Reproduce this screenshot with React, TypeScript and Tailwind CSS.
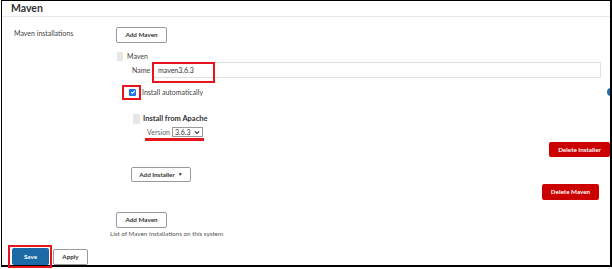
import React from "react";

const font = { fontFamily: 'Lato, "Noto Sans", sans-serif' };

function Btn({ children, className = "" }: { children: React.ReactNode; className?: string }) {
  return (
    <div
      className={`flex items-center justify-center rounded-[2px] border border-[#9a9a9a] bg-white text-[6.3px] font-bold text-[#333] ${className}`}
    >
      {children}
    </div>
  );
}

function RedBtn({ children, className = "" }: { children: React.ReactNode; className?: string }) {
  return (
    <div
      className={`flex items-center justify-center rounded-[2px] bg-[#cc0000] text-[6.3px] font-bold text-white ${className}`}
    >
      {children}
    </div>
  );
}

export default function App() {
  return (
    <div className="relative h-[269px] w-[612px] overflow-hidden bg-white" style={font}>
      {/* blue dot behind the right border */}
      <div className="absolute left-[607px] top-[88px] h-[8px] w-[8px] rounded-full bg-[#1d6fa5]" />

      <div className="relative z-10 ml-[1px] flex h-[267px] w-[611px] flex-col border-b-2 border-l border-r-2 border-t border-black">
        {/* header */}
        <div className="flex h-[16px] items-center border-b border-[#e8e8e8] pl-[9px]">
          <span className="text-[10.5px] font-bold leading-none text-[#333]">Maven</span>
        </div>

        {/* body */}
        <div className="flex">
          <div className="w-[114px] pl-[12px] pt-[12px]">
            <span className="block text-[7px] leading-[8px] text-[#444]">Maven installations</span>
          </div>

          <div className="flex flex-1 flex-col">
            <Btn className="mt-[10px] h-[16px] w-[51px]">Add Maven</Btn>

            {/* Maven block header */}
            <div className="mt-[9px] flex h-[9px] items-start">
              <div className="ml-[1px] h-[9px] w-[6px] bg-[#e6e6e6]" />
              <span className="ml-[4px] text-[7px] leading-[8px] text-[#444]">Maven</span>
            </div>

            {/* Name row */}
            <div className="mt-[1px] flex h-[16px] items-center">
              <span className="ml-[16px] w-[21px] text-[7px] leading-[8px] text-[#444]">Name</span>
              <div className="mr-[9px] flex h-[16px] flex-1 items-center border border-[#e0e0e0] pl-[4px]">
                <span className="text-[7px] leading-[8px] text-[#333]">maven3.6.3</span>
              </div>
            </div>

            {/* install automatically */}
            <div className="mt-[10px] flex h-[8px] items-center">
              <div className="ml-[13px] flex h-[7px] w-[7px] items-center justify-center rounded-[1px] bg-[#1a73e8]">
                <svg width="6" height="6" viewBox="0 0 10 10">
                  <path d="M2 5.2 L4.2 7.3 L8.2 2.6" stroke="white" strokeWidth="1.8" fill="none" />
                </svg>
              </div>
              <span className="ml-[6px] text-[7px] leading-[8px] text-[#444]">Install automatically</span>
            </div>

            {/* installer header */}
            <div className="mt-[18px] flex h-[10px] items-center">
              <div className="ml-[17px] h-[10px] w-[7px] bg-[#e6e6e6]" />
              <span className="ml-[3px] text-[7.5px] font-bold leading-[8px] text-[#333]">Install from Apache</span>
            </div>

            {/* version row */}
            <div className="mt-[3px] flex h-[10px] items-center">
              <span className="ml-[31px] w-[25px] text-[7px] leading-[8px] text-[#666]">Version</span>
              <div className="flex h-[10px] w-[31px] items-center justify-between border border-[#9a9a9a] px-[2px]">
                <span className="text-[7px] leading-[8px] text-[#333]">3.6.3</span>
                <svg width="6" height="5" viewBox="0 0 10 8">
                  <path d="M1.5 2 L5 5.5 L8.5 2" stroke="#333" strokeWidth="1.8" fill="none" />
                </svg>
              </div>
            </div>

            <RedBtn className="mt-[5px] h-[15px] w-[61px] self-end">Delete Installer</RedBtn>

            <Btn className="ml-[15px] mt-[10px] h-[15px] w-[60px]">
              Add Installer <span className="ml-[3px] text-[5px]">▼</span>
            </Btn>

            <RedBtn className="mr-[11px] mt-[2px] h-[16px] w-[57px] self-end">Delete Maven</RedBtn>

            <Btn className="mt-[12px] h-[16px] w-[51px]">Add Maven</Btn>

            <span className="-ml-[6px] mt-[2px] block h-[8px] text-[6.3px] leading-[8px] text-[#555]">
              List of Maven installations on this system
            </span>
          </div>
        </div>

        {/* bottom buttons */}
        <div className="ml-[10px] mt-[10px] flex h-[17px] items-end">
          <div className="flex h-[17px] w-[37px] items-center justify-center rounded-[2px] bg-[#1b6aa5] text-[6.3px] font-bold text-white">
            Save
          </div>
          <Btn className="ml-[4px] h-[16px] w-[35px]">Apply</Btn>
        </div>
      </div>

      {/* red annotations */}
      <div className="absolute left-[152px] top-[62px] z-20 h-[21px] w-[63px] border-2 border-[#e8141b]" />
      <div className="absolute left-[122px] top-[85px] z-20 h-[15px] w-[19px] border-2 border-[#e8141b]" />
      <div className="absolute left-[145px] top-[138px] z-20 h-[3px] w-[59px] bg-[#e8141b]" />
      <div className="absolute left-[8px] top-[245px] z-20 h-[23px] w-[44px] border-2 border-[#e8141b]" />
    </div>
  );
}
